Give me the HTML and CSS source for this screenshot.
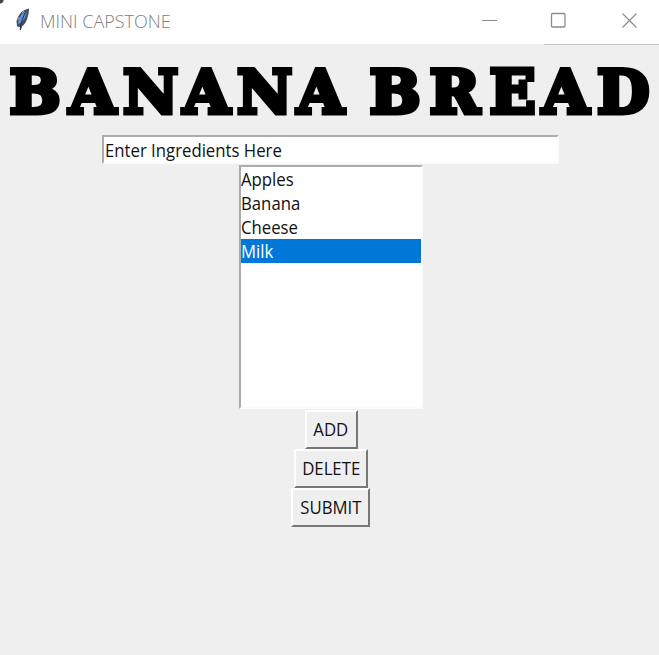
FILE: index.html
```html
<!DOCTYPE html>
<html lang="en">
<head>
<meta charset="utf-8">
<title>MINI CAPSTONE</title>
<link rel="stylesheet" href="styles.css">
</head>
<body>
<header class="titlebar">
  <svg class="feather" width="18" height="26" viewBox="0 0 18 26">
    <path d="M15 1.500 C10 2 4 7 2.500 14 L3 19.500 L6 20 L6.500 24 L8 19.500 C12 17 15 9 15 1.500Z" fill="#4a5059"/>
    <path d="M13 3.500 C8 6 4.500 10 4.200 17 C9 15.500 12.500 9 13 3.500Z" fill="#5b9be6"/>
    <path d="M12.500 4 C9 9 7 14 6.300 23" fill="none" stroke="#26384f" stroke-width="1.200"/>
    <path d="M8 6 L10 4 M3.500 13 L5 10" stroke="#a5aab0" stroke-width="1"/>
  </svg>
  <span class="caption"><span class="fit">MINI CAPSTONE</span></span>
  <svg class="controls" width="180" height="44" viewBox="0 0 180 44" fill="none" stroke="#8c8c8c">
    <path d="M3 20.500H18"/>
    <rect x="72.500" y="13.500" width="13.500" height="13.500" rx="1" stroke-width="1.300"/>
    <path d="M143.500 13.500L157.500 27.500M157.500 13.500L143.500 27.500" stroke-width="1.200"/>
  </svg>
</header>
<main class="client">
  <svg class="heading" width="659" height="70" viewBox="0 0 659 70" role="heading" aria-level="1">
    <text y="55.500" x="9.500 69 123 183 237 297 350 369.500 429.500 489.500 542 597">BANANA BREAD</text>
  </svg>
  <div class="entry"><span class="fit">Enter Ingredients Here</span></div>
  <div class="list">
    <div class="item"><span class="fit">Apples</span></div>
    <div class="item"><span class="fit">Banana</span></div>
    <div class="item"><span class="fit">Cheese</span></div>
    <div class="item selected"><span class="fit">Milk</span></div>
  </div>
  <button class="button add"><span class="fit">ADD</span></button>
  <button class="button delete"><span class="fit">DELETE</span></button>
  <button class="button submit"><span class="fit">SUBMIT</span></button>
</main>
</body>
</html>
```
FILE: styles.css
```css
* { box-sizing: border-box; }
body {
  margin: 0;
  height: 655px;
  overflow: hidden;
  background: #efefef;
  color: #111;
  font: 18px/24px "Open Sans", "Noto Sans", sans-serif;
}
.titlebar {
  display: flex;
  height: 44px;
  padding-left: 14px;
  background: radial-gradient(circle at 0 0, #444 3px, transparent 4px), #fff;
}
.feather { flex: none; margin-top: 7px; }
.caption {
  flex: none;
  width: 445px;
  padding: 9px 0 0 8px;
  color: #808080;
}
.caption .fit { font-weight: 300; transform: scaleX(1); }
.controls { flex: none; margin-left: 2px; }
.fit {
  display: inline-block;
  white-space: nowrap;
  transform: scaleX(.93);
  transform-origin: left center;
}
.client {
  display: flex;
  flex-direction: column;
  align-items: center;
  background: linear-gradient(#c8c8c8, #c8c8c8) 544px 0 / 115px 1px no-repeat;
}
.heading {
  display: block;
  margin: 13px 0 8px;
  font: bold 60.5px "DejaVu Serif", serif;
  fill: #000;
  stroke: #000;
  stroke-width: 4.8px;
}
.entry {
  width: 457px;
  height: 29px;
  margin-left: 2px;
  padding: 1px 0 0 1px;
  background: #fff;
  border: 2px solid #fbfbfb;
  border-top-color: #acacac;
  border-left-color: #acacac;
}
.list {
  width: 184px;
  height: 244px;
  margin: 1px 0 1px 2px;
  background: #fff;
  border: 2px solid #fbfbfb;
  border-top-color: #acacac;
  border-left-color: #acacac;
}
.item { height: 24px; }
.selected { background: #0078d7; color: #fff; }
.button {
  height: 39px;
  padding: 0 0 2px;
  background: #efefef;
  border: 2px solid #fff;
  border-right-color: #777;
  border-bottom-color: #777;
  color: #111;
  font: inherit;
}
.button .fit { transform-origin: center; }
.add { width: 53px; margin-left: 3px; }
.delete { width: 74px; margin-left: 3px; }
.submit { width: 79px; margin-left: 2px; }
```
